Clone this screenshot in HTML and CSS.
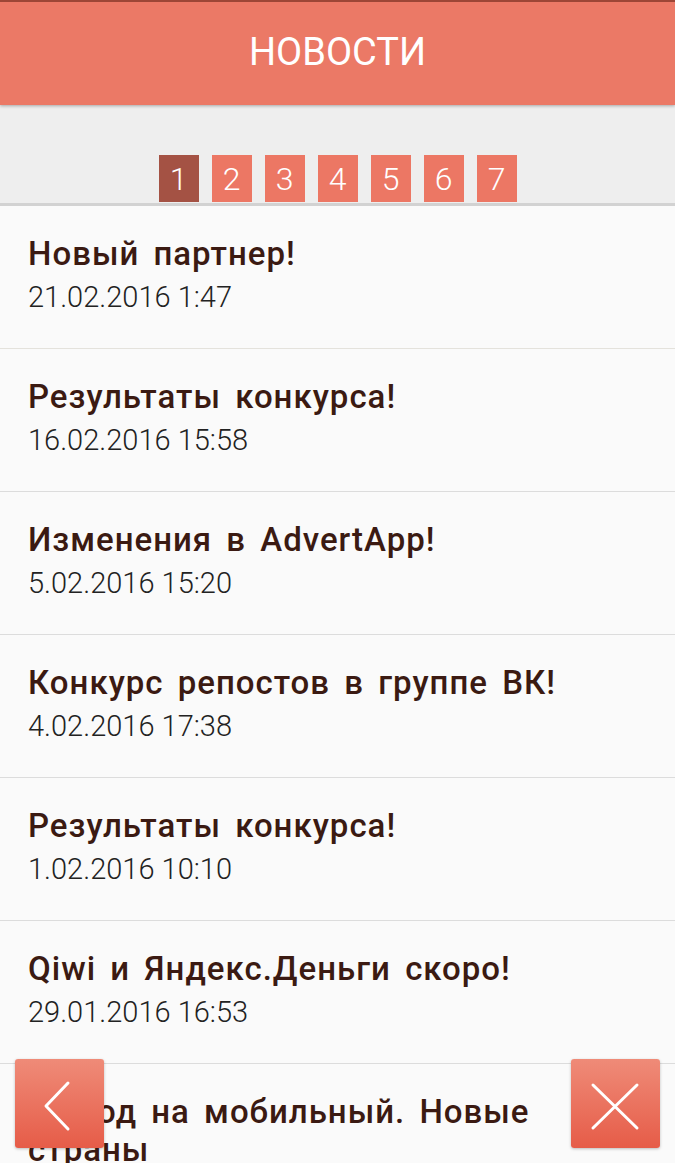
FILE: index.html
```html
<!DOCTYPE html>
<html lang="ru">
<head>
    <meta charset="UTF-8">
    <meta name="viewport" content="width=device-width, initial-scale=1.0">
    <title>Новости</title>
    <link rel="stylesheet" href="styles.css">
</head>
<body>
    <!-- Шапка -->
    <div class="header">
        <h1>НОВОСТИ</h1>
    </div>

    <!-- Страницы -->
    <div class="pages">
        <span class="page active">1</span>
        <span class="page">2</span>
        <span class="page">3</span>
        <span class="page">4</span>
        <span class="page">5</span>
        <span class="page">6</span>
        <span class="page">7</span>
    </div>

    <!-- Список новостей -->
    <div class="news">
        <div class="item">
            <div class="title">Новый партнер!</div>
            <div class="date">21.02.2016 1:47</div>
        </div>
        <div class="item">
            <div class="title">Результаты конкурса!</div>
            <div class="date">16.02.2016 15:58</div>
        </div>
        <div class="item">
            <div class="title">Изменения в AdvertApp!</div>
            <div class="date">5.02.2016 15:20</div>
        </div>
        <div class="item">
            <div class="title">Конкурс репостов в группе ВК!</div>
            <div class="date">4.02.2016 17:38</div>
        </div>
        <div class="item">
            <div class="title">Результаты конкурса!</div>
            <div class="date">1.02.2016 10:10</div>
        </div>
        <div class="item">
            <div class="title">Qiwi и Яндекс.Деньги скоро!</div>
            <div class="date">29.01.2016 16:53</div>
        </div>
        <div class="item">
            <div class="title">Вывод на мобильный. Новые страны</div>
            <div class="date">25.01.2016 12:04</div>
        </div>
    </div>

    <!-- Кнопки -->
    <button class="fab back">
        <svg width="88" height="88" viewBox="0 0 88 88">
            <polyline points="53,23 31,46 53,69" fill="none" stroke="#fff" stroke-width="3" stroke-linecap="round" stroke-linejoin="round"/>
        </svg>
    </button>
    <button class="fab close">
        <svg width="88" height="88" viewBox="0 0 88 88">
            <line x1="22" y1="25" x2="66" y2="68" stroke="#fff" stroke-width="3" stroke-linecap="round"/>
            <line x1="66" y1="25" x2="22" y2="68" stroke="#fff" stroke-width="3" stroke-linecap="round"/>
        </svg>
    </button>
</body>
</html>
```

FILE: styles.css
```css
body {
    margin: 0;
    padding: 0;
    font-family: Roboto, "Noto Sans", sans-serif;
    background-color: #fafafa;
    overflow: hidden;
}
.header {
    position: relative;
    z-index: 2;
    height: 103px;
    border-top: 2px solid #9c4636;
    background-color: #eb7966;
    display: flex;
    align-items: center;
    justify-content: center;
    box-shadow: 0 1px 3px rgba(0, 0, 0, 0.3);
}
.header h1 {
    margin: 0 0 4px;
    color: white;
    font-size: 38px;
    font-weight: 400;
}
.pages {
    height: 98px;
    background-color: #eeeeee;
    display: flex;
    align-items: flex-end;
    justify-content: center;
    gap: 13px;
    border-bottom: 3px solid #d2d2d2;
}
.page {
    width: 40px;
    height: 47px;
    margin-bottom: 1px;
    display: flex;
    align-items: center;
    justify-content: center;
    background-color: #ec7764;
    color: white;
    font-size: 32px;
    font-weight: 300;
}
.page.active {
    background-color: #a45244;
}
.item {
    padding: 29px 28px 33px;
    border-bottom: 1px solid #dcdcdc;
}
.item:first-child {
    border-bottom-color: #e4e2dc;
}
.title {
    color: #3b1a12;
    font-size: 33px;
    font-weight: 500;
    line-height: 38px;
    letter-spacing: 1px;
    word-spacing: 5px;
}
.date {
    margin-top: 6px;
    color: #222;
    font-size: 29px;
    font-weight: 300;
    line-height: 36px;
}
.fab {
    position: fixed;
    top: 1059px;
    width: 89px;
    height: 89px;
    padding: 0;
    border: none;
    border-radius: 3px;
    background: linear-gradient(#ef8b78, #e65c48);
    box-shadow: 0 1px 3px rgba(0, 0, 0, 0.25);
}
.fab svg {
    display: block;
}
.back {
    left: 15px;
}
.close {
    left: 571px;
}
```
